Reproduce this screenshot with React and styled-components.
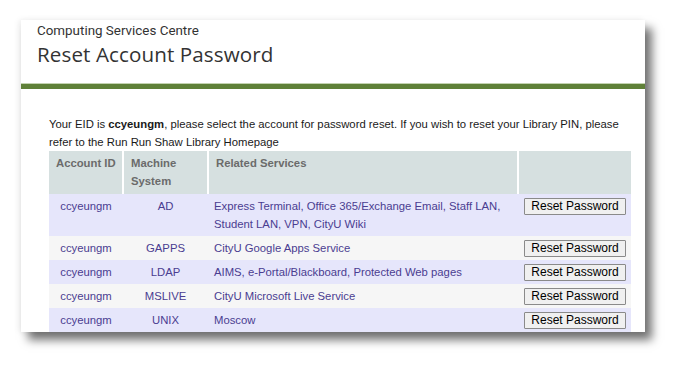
import React from "react";
import styled, { createGlobalStyle } from "styled-components";

const Global = createGlobalStyle`
  html, body { margin: 0; padding: 0; background: #ffffff; }
  body { font-family: "Liberation Sans", Arial, sans-serif; }
`;

const Page = styled.div`
  width: 687px;
  height: 375px;
  overflow: hidden;
  padding: 20px 0 0 21px;
  box-sizing: border-box;
`;

const Card = styled.div`
  width: 624px;
  height: 312px;
  background: #ffffff;
  overflow: hidden;
  box-shadow: 7px 8px 9px rgba(0, 0, 0, 0.55), -2px 0 6px rgba(0, 0, 0, 0.08);
  display: flex;
  flex-direction: column;
`;

const Header = styled.header`
  flex-shrink: 0;
  padding: 2px 16px 0;
  height: 61px;
  font-family: Roboto, "Open Sans", sans-serif;
  color: #333333;
`;

const Org = styled.div`
  font-size: 13.4px;
  line-height: 18px;
`;

const Title = styled.h1`
  margin: 0;
  font-family: "Open Sans", Roboto, sans-serif;
  font-weight: 400;
  font-size: 20.6px;
  line-height: 28px;
  letter-spacing: 0.1px;
`;

const GreenBar = styled.div`
  flex-shrink: 0;
  height: 5px;
  border-top: 1px solid #c3d3b0;
  background: #5f8038;
`;

const Body = styled.div`
  flex-shrink: 0;
  padding: 26px 14px 0 28px;
`;

const Intro = styled.p`
  margin: 0;
  font-size: 11.3px;
  line-height: 18px;
  color: #1a1a1a;
  white-space: nowrap;
`;

const Table = styled.table`
  width: 582px;
  border-collapse: collapse;
  font-size: 11.3px;
  table-layout: fixed;
`;

const Th = styled.th`
  background: #d6e0e0;
  color: #6b6b6b;
  font-weight: bold;
  text-align: left;
  vertical-align: top;
  padding: 3px 6px 4px 7px;
  line-height: 18px;
  border-right: 2px solid #ffffff;
  width: ${(p) => p.$w}px;
  height: 42px;
  box-sizing: border-box;
  white-space: ${(p) => (p.$nowrap ? "nowrap" : "normal")};
  &:last-child { border-right: none; }
`;

const Tr = styled.tr`
  background: ${(p) => (p.$alt ? "#f6f6f6" : "#e6e6fb")};
`;

const Td = styled.td`
  color: #4a3d91;
  text-align: ${(p) => (p.$center ? "center" : "left")};
  vertical-align: top;
  padding: 3px 6px;
  line-height: 18px;
  white-space: nowrap;
`;

const ButtonCell = styled.td`
  vertical-align: top;
  padding: 4px 6px 3px;
  line-height: 17px;
`;

const ResetButton = styled.button`
  font-family: "Liberation Sans", Arial, sans-serif;
  font-size: 12px;
  color: #000000;
  background: #f0f0f0;
  border: 1px solid #8a8a8a;
  border-radius: 1px;
  width: 102px;
  height: 17px;
  padding: 0;
  line-height: 15px;
  display: block;
`;

const rows = [
  { sys: "AD", svc: ["Express Terminal, Office 365/Exchange Email, Staff LAN,", "Student LAN, VPN, CityU Wiki"] },
  { sys: "GAPPS", svc: ["CityU Google Apps Service"] },
  { sys: "LDAP", svc: ["AIMS, e-Portal/Blackboard, Protected Web pages"] },
  { sys: "MSLIVE", svc: ["CityU Microsoft Live Service"] },
  { sys: "UNIX", svc: ["Moscow"] },
];

export default function App() {
  return (
    <>
      <Global />
      <Page>
        <Card>
          <Header>
            <Org>Computing Services Centre</Org>
            <Title>Reset Account Password</Title>
          </Header>
          <GreenBar />
          <Body>
            <Intro>
              Your EID is <b>ccyeungm</b>, please select the account for password reset. If you wish to reset your Library PIN, please
              <br />
              refer to the Run Run Shaw Library Homepage
            </Intro>
            <Table>
              <thead>
                <tr>
                  <Th $w={74} $nowrap>Account ID</Th>
                  <Th $w={85}>Machine System</Th>
                  <Th $w={310}>Related Services</Th>
                  <Th $w={113}></Th>
                </tr>
              </thead>
              <tbody>
                {rows.map((r, i) => (
                  <Tr key={r.sys} $alt={i % 2 === 1}>
                    <Td $center>ccyeungm</Td>
                    <Td $center>{r.sys}</Td>
                    <Td>
                      {r.svc.map((s, j) => (
                        <React.Fragment key={j}>
                          {j > 0 && <br />}
                          {s}
                        </React.Fragment>
                      ))}
                    </Td>
                    <ButtonCell>
                      <ResetButton type="button">Reset Password</ResetButton>
                    </ButtonCell>
                  </Tr>
                ))}
              </tbody>
            </Table>
          </Body>
        </Card>
      </Page>
    </>
  );
}
